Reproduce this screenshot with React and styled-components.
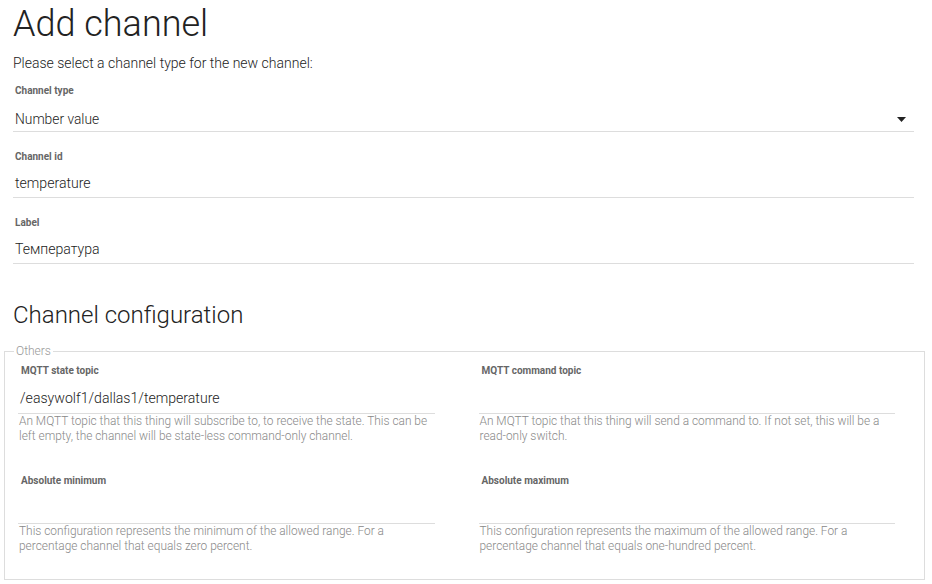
import React from 'react'
import styled, { createGlobalStyle } from 'styled-components'

const GlobalStyle = createGlobalStyle`
  html, body {
    margin: 0;
    padding: 0;
    background: #fff;
  }
  body {
    font-family: Roboto, "Noto Sans", "Liberation Sans", sans-serif;
    color: #222;
  }
`;

const Page = styled.div`
  padding: 3px 18px 0 13px;
`;

const Title = styled.h1`
  margin: 0;
  font-size: 36px;
  line-height: 42px;
  font-weight: 300;
  color: #222;
`;

const Intro = styled.p`
  margin: 10px 0 14px;
  font-size: 14px;
  line-height: 16px;
  font-weight: 300;
  color: #222;
`;

const Field = styled.div`
  margin-bottom: ${p => p.$gap ?? 19}px;
`;

const Label = styled.div`
  font-size: 10px;
  line-height: 12px;
  font-weight: 700;
  color: #666;
  padding-left: ${p => p.$indent || 2}px;
  margin-bottom: ${p => p.$space || 6}px;
`;

const Value = styled.div`
  height: ${p => p.$h || 28}px;
  line-height: ${p => p.$h || 28}px;
  font-size: 14.1px;
  font-weight: 300;
  color: #1c1c1c;
  padding-left: 2px;
  border-bottom: 1px solid #ddd;
  white-space: nowrap;
`;

const SelectBox = styled.div`
  height: 24px;
  padding-top: 4px;
  line-height: 24px;
  font-size: 13.8px;
  font-weight: 300;
  color: #1c1c1c;
  padding-left: 2px;
  border-bottom: 1px solid #ddd;
  display: flex;
  justify-content: space-between;
  align-items: center;
`;

const Arrow = styled.svg`
  width: 9px;
  height: 5px;
  margin-right: 8px;
  margin-top: 1px;
`;

const SectionTitle = styled.h2`
  margin: 37px 0 15px;
  font-size: 24px;
  line-height: 28px;
  font-weight: 300;
  color: #222;
`;

const Group = styled.fieldset`
  margin: 0 -11px 5px -9px;
  padding: 7px 29px 25px 13px;
  border: 1px solid #ddd;
`;

const Legend = styled.legend`
  margin-left: -4px;
  padding: 0 2px;
  font-size: 12px;
  line-height: 14px;
  font-weight: 300;
  color: #999;
`;

const Grid = styled.div`
  display: grid;
  grid-template-columns: 1fr 1fr;
  column-gap: 44px;
  row-gap: 31px;
`;

const Help = styled.div`
  font-size: 11.9px;
  line-height: 15px;
  font-weight: 300;
  color: #888;
  padding-left: 1px;
`;

const configFields = [
  {
    label: 'MQTT state topic',
    value: '/easywolf1/dallas1/temperature',
    help: 'An MQTT topic that this thing will subscribe to, to receive the state. This can be left empty, the channel will be state-less command-only channel.'
  },
  {
    label: 'MQTT command topic',
    value: '',
    help: 'An MQTT topic that this thing will send a command to. If not set, this will be a read-only switch.'
  },
  {
    label: 'Absolute minimum',
    value: '',
    help: 'This configuration represents the minimum of the allowed range. For a percentage channel that equals zero percent.'
  },
  {
    label: 'Absolute maximum',
    value: '',
    help: 'This configuration represents the maximum of the allowed range. For a percentage channel that equals one-hundred percent.'
  }
];

const App = () => {
  return (
    <Page>
      <GlobalStyle />
      <Title>Add channel</Title>
      <Intro>Please select a channel type for the new channel:</Intro>

      <Field>
        <Label>Channel type</Label>
        <SelectBox>
          <span>Number value</span>
          <Arrow viewBox="0 0 9 5">
            <path d="M0 0h9L4.5 5z" fill="#222" />
          </Arrow>
        </SelectBox>
      </Field>
      <Field>
        <Label>Channel id</Label>
        <Value>temperature</Value>
      </Field>
      <Field $gap={0}>
        <Label>Label</Label>
        <Value>Температура</Value>
      </Field>

      <SectionTitle>Channel configuration</SectionTitle>
      <Group>
        <Legend>Others</Legend>
        <Grid>
          {configFields.map(f => (
            <div key={f.label}>
              <Label $indent={3} $space={7}>{f.label}</Label>
              <Value $h={29}>{f.value}</Value>
              <Help>{f.help}</Help>
            </div>
          ))}
        </Grid>
      </Group>
    </Page>
  )
}

export default App
